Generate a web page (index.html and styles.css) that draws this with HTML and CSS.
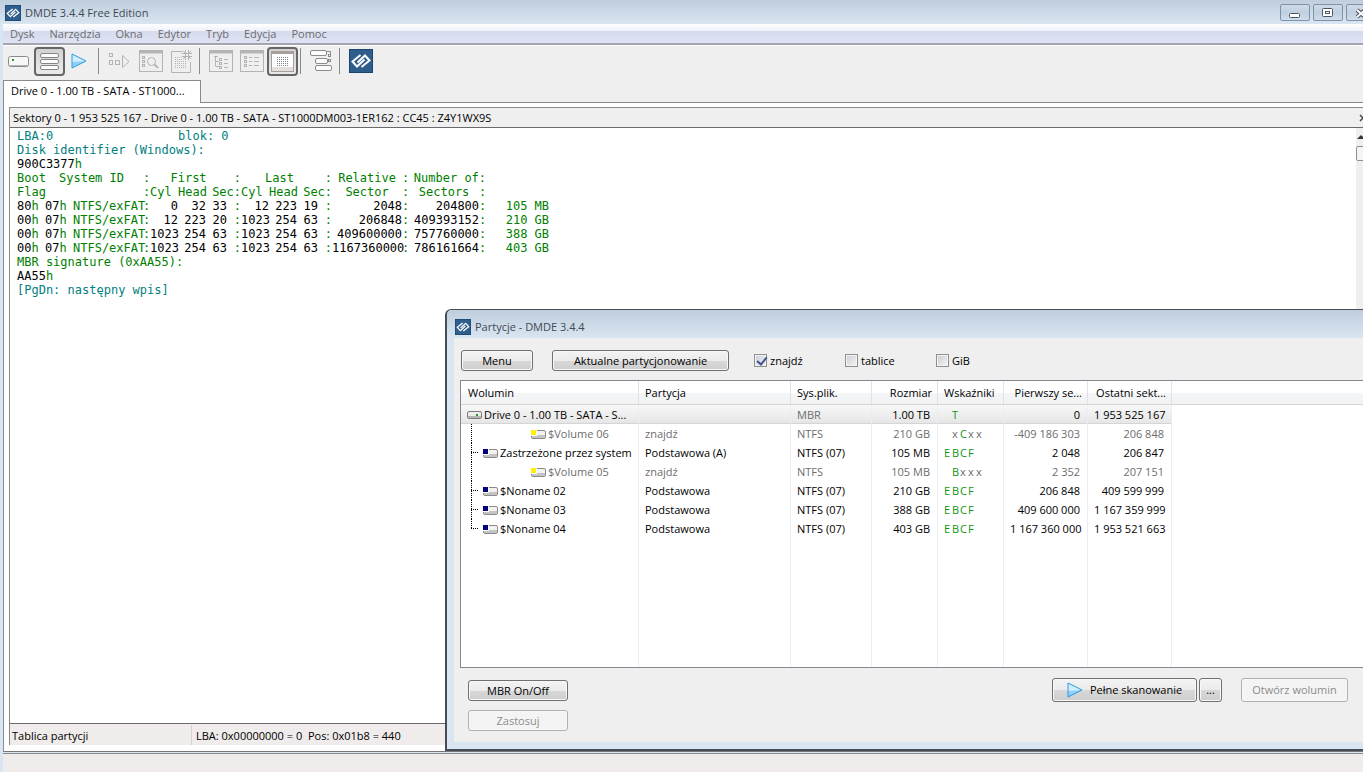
FILE: index.html
```
<!DOCTYPE html>
<html lang="pl">
<head>
    <meta charset="UTF-8">
    <meta name="viewport" content="width=device-width, initial-scale=1.0">
    <title>DMDE 3.4.4 Free Edition</title>
    <link rel="stylesheet" href="styles.css">
</head>
<body>
    <!-- shared icons -->
    <svg class="defs" width="0" height="0">
        <symbol id="logo" viewBox="0 0 24 24">
            <rect width="24" height="24" fill="#2f5d8c"/>
            <rect x="0.5" y="0.5" width="23" height="23" fill="none" stroke="#1d446f"/>
            <g fill="none" stroke="#fff" stroke-width="2">
                <path d="M11.500 6L3.500 12.500L8 17.500L15.500 10.500"/>
                <path d="M12.500 18L20.500 11.500L16 6.500L8.500 13.500"/>
            </g>
        </symbol>
        <symbol id="play" viewBox="0 0 16 16">
            <path d="M1 1L15 8L1 15Z" fill="#8fd0fb"/>
            <path d="M1 1L15 8L1 9Z" fill="#d3edfe"/>
            <path d="M1 1L15 8L1 15Z" fill="none" stroke="#2f9be0"/>
        </symbol>
        <symbol id="drive" viewBox="0 0 15 10">
            <rect x="0.5" y="1.500" width="14" height="7" rx="1.500" fill="#ececec" stroke="#7d7d7d"/>
            <rect x="1" y="6" width="13" height="2" fill="#b5b5b5"/>
            <rect x="9" y="4" width="2" height="2" fill="#1c9a2c"/>
        </symbol>
        <symbol id="part" viewBox="0 0 15 10">
            <rect x="0.5" y="1.500" width="14" height="8" rx="1.500" fill="#f2f2f2" stroke="#8a8a8a"/>
            <rect x="1" y="6" width="13" height="3" fill="#c4c4c4"/>
            <rect x="0" y="0" width="6" height="7" fill="#fff"/>
            <rect x="0" y="1" width="5" height="5" fill="currentColor"/>
        </symbol>
        <symbol id="tree-line" viewBox="0 0 22 19">
            <path d="M10.500 0V19" stroke="#000" stroke-dasharray="1 1"/>
        </symbol>
        <symbol id="tree-mid" viewBox="0 0 22 19">
            <path d="M10.500 0V19M10 9.500H18" stroke="#000" stroke-dasharray="1 1"/>
        </symbol>
        <symbol id="tree-end" viewBox="0 0 22 19">
            <path d="M10.500 0V10M10 9.500H18" stroke="#000" stroke-dasharray="1 1"/>
        </symbol>
    </svg>

    <div class="window">
        <header class="titlebar">
            <svg class="logo" width="16" height="16"><use href="#logo"/></svg>
            <span class="title">DMDE 3.4.4 Free Edition</span>
            <div class="window-buttons">
                <button aria-label="Minimalizuj"><svg width="12" height="14"><rect x="0.5" y="7.500" width="10" height="4" rx="1" fill="#fff" stroke="#4b5560"/></svg></button>
                <button aria-label="Maksymalizuj"><svg width="12" height="14"><rect x="0.500" y="2.500" width="10" height="8" rx="1" fill="#fff" stroke="#4b5560"/><rect x="3.500" y="5.500" width="4" height="2" fill="#fff" stroke="#4b5560"/></svg></button>
                <button aria-label="Zamknij"><svg width="12" height="14"><path d="M2 4L10 11M10 4L2 11" stroke="#4b5560" stroke-width="4"/><path d="M2 4L10 11M10 4L2 11" stroke="#fff" stroke-width="2"/></svg></button>
            </div>
        </header>

        <nav class="menu">
            <a href="#">Dysk</a>
            <a href="#">Narzędzia</a>
            <a href="#">Okna</a>
            <a href="#">Edytor</a>
            <a href="#">Tryb</a>
            <a href="#">Edycja</a>
            <a href="#">Pomoc</a>
        </nav>

        <div class="toolbar">
            <button aria-label="Wybierz dysk">
                <svg width="21" height="11"><rect x="0.5" y="0.5" width="20" height="10" rx="2" fill="#f7f7f7" stroke="#8b8b8b"/><path d="M2 9.500H19" stroke="#b5b5b5"/><rect x="4" y="3" width="2" height="2" fill="#2a9a2a"/></svg>
            </button>
            <button class="pressed" aria-label="Partycje">
                <svg width="19" height="17" fill="#fcfcfc" stroke="#858585"><rect x="0.5" y="0.5" width="18" height="4" rx="1.500"/><rect x="0.5" y="6.500" width="18" height="4" rx="1.500"/><rect x="0.5" y="12.500" width="18" height="4" rx="1.500"/></svg>
            </button>
            <button class="scan" aria-label="Skanuj"><svg width="16" height="16"><use href="#play"/></svg></button>
            <span class="separator"></span>
            <button aria-label="Otwórz" disabled>
                <svg width="21" height="16" fill="none" stroke="#b4b4b4"><rect x="0.5" y="0.5" width="3" height="3"/><rect x="0.5" y="7.500" width="3" height="4"/><rect x="6.500" y="7.500" width="4" height="4"/><path d="M13.500 2.500V14.500L20 8.500Z"/></svg>
            </button>
            <button aria-label="Szukaj" disabled>
                <svg width="24" height="22" fill="none" stroke="#b4b4b4"><rect x="0.5" y="0.5" width="23" height="21"/><path d="M1 2H23" stroke-width="3"/><rect x="3.500" y="6.500" width="2" height="2"/><rect x="3.500" y="10.500" width="2" height="2"/><rect x="3.500" y="14.500" width="2" height="2"/><circle cx="12.500" cy="11.500" r="4"/><path d="M15.500 14.500L19 18" stroke-width="2"/></svg>
            </button>
            <button aria-label="Nowy" disabled>
                <svg width="21" height="24" fill="none" stroke="#b4b4b4"><path d="M11 2.500H0.500V23.500H19.500V13"/><path d="M4 8.500H10M4 10.500H12M4 12.500H15M4 14.500H15M4 16.500H15M4 18.500H15" stroke-dasharray="1 1"/><path d="M14.500 1V4M17.500 1V4M14.500 8V11M17.500 8V11M10.500 4.500H14M10.500 7.500H14M18 4.500H21M18 7.500H21M12 2L14 4M20 2L18 4M12 10L14 8M20 10L18 8"/><rect x="14.500" y="4.500" width="3" height="3" fill="#efefef"/></svg>
            </button>
            <span class="separator"></span>
            <button aria-label="Drzewo" disabled>
                <svg width="24" height="22" fill="none" stroke="#b4b4b4"><rect x="0.5" y="0.5" width="23" height="21"/><path d="M1 2H23" stroke-width="3"/><path d="M5 6.500H9M6.500 7V16.500M7 11.500H10M7 16.500H10M15 9.500H19M15 13.500H19M15 17.500H19"/><rect x="10.500" y="8.500" width="2" height="2"/><rect x="10.500" y="12.500" width="2" height="2"/><rect x="10.500" y="16.500" width="2" height="2"/></svg>
            </button>
            <button aria-label="Lista" disabled>
                <svg width="24" height="22" fill="none" stroke="#b4b4b4"><rect x="0.5" y="0.5" width="23" height="21"/><path d="M1 2H23" stroke-width="3"/><rect x="4.500" y="6.500" width="2" height="2"/><rect x="4.500" y="10.500" width="2" height="2"/><rect x="4.500" y="14.500" width="2" height="2"/><path d="M9 7.500H12M14 7.500H19M9 11.500H12M14 11.500H19M9 15.500H12M14 15.500H19"/></svg>
            </button>
            <button class="pressed" aria-label="Edytor dysku">
                <svg width="23" height="21" fill="none"><rect x="0.5" y="0.5" width="22" height="20" fill="#fff" stroke="#a89f9c"/><path d="M1 2H22" stroke="#a89f9c" stroke-width="2"/><path d="M1 16H22V20H1Z" fill="#e4dfdd"/><path d="M6 6.500H18M6 8.500H18M6 10.500H18M6 12.500H18M6 14.500H18" stroke="#7b8288" stroke-dasharray="1 1"/></svg>
            </button>
            <span class="separator"></span>
            <button aria-label="Okna">
                <svg width="23" height="22" fill="#fcfcfc" stroke="#8b8b8b"><path d="M14 1.500H20.500V4" fill="none"/><rect x="0.5" y="0.5" width="16" height="5" rx="1.500"/><rect x="5.500" y="8.500" width="12" height="5" rx="1.500"/><rect x="5.500" y="15.500" width="16" height="5" rx="1.500"/><rect x="18.500" y="4.500" width="2" height="2"/><rect x="18.500" y="9.500" width="2" height="2"/></svg>
            </button>
            <span class="separator"></span>
            <button aria-label="O programie"><svg width="24" height="24"><use href="#logo"/></svg></button>
        </div>

        <div class="tabs">
            <a class="tab" href="#">Drive 0 - 1.00 TB - SATA - ST1000...</a>
        </div>

        <main class="workspace">
            <section class="panel">
                <div class="panel-title">
                    <span>Sektory 0 - 1 953 525 167 - Drive 0 - 1.00 TB - SATA - ST1000DM003-1ER162 : CC45 : Z4Y1WX9S</span>
                    <button class="panel-close" aria-label="Zamknij panel"><svg width="8" height="8"><path d="M1 1L7 7M7 1L1 7" stroke="#444" stroke-width="1.500"/></svg></button>
                </div>
                <div class="panel-body">
                    <div class="sector">
                        <div class="sector-line teal"><span class="lba">LBA:0</span><span>blok: 0</span></div>
                        <div class="sector-line teal">Disk identifier (Windows):</div>
                        <div class="sector-line">900C3377<i>h</i></div>
                        <table class="mbr">
                            <colgroup>
                                <col class="ch4"><col class="ch4"><col class="ch10"><col class="ch1">
                                <col class="ch4"><col class="ch4"><col class="ch3"><col class="ch2">
                                <col class="ch4"><col class="ch4"><col class="ch3"><col class="ch2">
                                <col class="ch10"><col class="ch1"><col class="ch10"><col class="ch1"><col class="ch9">
                            </colgroup>
                            <thead>
                                <tr><th class="left">Boot</th><th colspan="2"><span class="system">System ID</span></th><th>:</th><th colspan="3" class="center">First</th><th>:</th><th colspan="3" class="center">Last</th><th>:</th><th class="center">Relative</th><th>:</th><th colspan="2">Number of:</th><th></th></tr>
                                <tr><th class="left">Flag</th><th colspan="2"></th><th>:</th><th class="left">Cyl</th><th>Head</th><th colspan="2">Sec:</th><th class="left">Cyl</th><th>Head</th><th colspan="2">Sec:</th><th class="center">Sector</th><th>:</th><th class="center">Sectors</th><th>:</th><th></th></tr>
                            </thead>
                            <tbody>
                                <tr><td class="left">80<i>h</i></td><td class="left">07<i>h</i></td><td><i>NTFS/exFAT</i></td><td><i>:</i></td><td>0</td><td>32</td><td>33</td><td><i>:</i></td><td>12</td><td>223</td><td>19</td><td><i>:</i></td><td>2048</td><td><i>:</i></td><td>204800</td><td><i>:</i></td><td><i>105 MB</i></td></tr>
                                <tr><td class="left">00<i>h</i></td><td class="left">07<i>h</i></td><td><i>NTFS/exFAT</i></td><td><i>:</i></td><td>12</td><td>223</td><td>20</td><td><i>:</i></td><td>1023</td><td>254</td><td>63</td><td><i>:</i></td><td>206848</td><td><i>:</i></td><td>409393152</td><td><i>:</i></td><td><i>210 GB</i></td></tr>
                                <tr><td class="left">00<i>h</i></td><td class="left">07<i>h</i></td><td><i>NTFS/exFAT</i></td><td><i>:</i></td><td>1023</td><td>254</td><td>63</td><td><i>:</i></td><td>1023</td><td>254</td><td>63</td><td><i>:</i></td><td>409600000</td><td><i>:</i></td><td>757760000</td><td><i>:</i></td><td><i>388 GB</i></td></tr>
                                <tr><td class="left">00<i>h</i></td><td class="left">07<i>h</i></td><td><i>NTFS/exFAT</i></td><td><i>:</i></td><td>1023</td><td>254</td><td>63</td><td><i>:</i></td><td>1023</td><td>254</td><td>63</td><td><i>:</i></td><td>1167360000</td><td><i>:</i></td><td>786161664</td><td><i>:</i></td><td><i>403 GB</i></td></tr>
                            </tbody>
                        </table>
                        <div class="sector-line green">MBR signature (0xAA55):</div>
                        <div class="sector-line">AA55<i>h</i></div>
                        <div class="sector-line teal">[PgDn: następny wpis]</div>
                    </div>
                    <div class="scrollbar">
                        <svg width="8" height="18"><path d="M1 11L5 7L9 11Z" fill="#333"/></svg>
                        <div class="thumb"></div>
                    </div>
                </div>
                <div class="panel-status">
                    <span class="status-name">Tablica partycji</span>
                    <span class="status-pos">LBA: 0x00000000 = 0&nbsp; Pos: 0x01b8 = 440</span>
                </div>
            </section>
        </main>
        <footer class="statusbar"></footer>
    </div>

    <div class="dialog" role="dialog" aria-labelledby="dialogTitle">
        <div class="dialog-title">
            <svg width="16" height="16"><use href="#logo"/></svg>
            <span id="dialogTitle">Partycje - DMDE 3.4.4</span>
        </div>
        <div class="dialog-body">
            <div class="options">
                <button class="btn btn-menu">Menu</button>
                <button class="btn btn-current">Aktualne partycjonowanie</button>
                <label class="check" for="found"><input type="checkbox" id="found" checked>znajdź</label>
                <label class="check" for="tables"><input type="checkbox" id="tables">tablice</label>
                <label class="check" for="gib"><input type="checkbox" id="gib">GiB</label>
            </div>
            <div class="list">
                <table class="volumes">
                    <colgroup>
                        <col class="c-volume"><col class="c-partition"><col class="c-fs"><col class="c-size"><col class="c-flags"><col class="c-sector"><col class="c-sector"><col>
                    </colgroup>
                    <thead>
                        <tr><th>Wolumin</th><th>Partycja</th><th>Sys.plik.</th><th class="num">Rozmiar</th><th>Wskaźniki</th><th class="num">Pierwszy se...</th><th class="num">Ostatni sekt...</th><th></th></tr>
                    </thead>
                    <tbody>
                        <tr class="selected">
                            <td><div class="name"><svg width="15" height="10"><use href="#drive"/></svg>Drive 0 - 1.00 TB - SATA - S...</div></td>
                            <td></td><td class="muted">MBR</td><td class="num">1.00 TB</td>
                            <td><div class="flags"><b></b><b>T</b></div></td>
                            <td class="num">0</td><td class="num">1 953 525 167</td><td class="rest"></td>
                        </tr>
                        <tr class="muted">
                            <td><div class="name found"><svg class="tree" width="22" height="19"><use href="#tree-line"/></svg><svg class="yellow" width="15" height="10"><use href="#part"/></svg>$Volume 06</div></td>
                            <td>znajdź</td><td>NTFS</td><td class="num">210 GB</td>
                            <td><div class="flags"><span></span><span>x</span><b>C</b><span>x</span><span>x</span></div></td>
                            <td class="num">-409 186 303</td><td class="num">206 848</td><td></td>
                        </tr>
                        <tr>
                            <td><div class="name child"><svg class="tree" width="22" height="19"><use href="#tree-mid"/></svg><svg class="navy" width="15" height="10"><use href="#part"/></svg>Zastrzeżone przez system</div></td>
                            <td>Podstawowa (A)</td><td>NTFS (07)</td><td class="num">105 MB</td>
                            <td><div class="flags"><b>E</b><b>B</b><b>C</b><b>F</b></div></td>
                            <td class="num">2 048</td><td class="num">206 847</td><td></td>
                        </tr>
                        <tr class="muted">
                            <td><div class="name found"><svg class="tree" width="22" height="19"><use href="#tree-line"/></svg><svg class="yellow" width="15" height="10"><use href="#part"/></svg>$Volume 05</div></td>
                            <td>znajdź</td><td>NTFS</td><td class="num">105 MB</td>
                            <td><div class="flags"><span></span><b>B</b><span>x</span><span>x</span><span>x</span></div></td>
                            <td class="num">2 352</td><td class="num">207 151</td><td></td>
                        </tr>
                        <tr>
                            <td><div class="name child"><svg class="tree" width="22" height="19"><use href="#tree-mid"/></svg><svg class="navy" width="15" height="10"><use href="#part"/></svg>$Noname 02</div></td>
                            <td>Podstawowa</td><td>NTFS (07)</td><td class="num">210 GB</td>
                            <td><div class="flags"><b>E</b><b>B</b><b>C</b><b>F</b></div></td>
                            <td class="num">206 848</td><td class="num">409 599 999</td><td></td>
                        </tr>
                        <tr>
                            <td><div class="name child"><svg class="tree" width="22" height="19"><use href="#tree-mid"/></svg><svg class="navy" width="15" height="10"><use href="#part"/></svg>$Noname 03</div></td>
                            <td>Podstawowa</td><td>NTFS (07)</td><td class="num">388 GB</td>
                            <td><div class="flags"><b>E</b><b>B</b><b>C</b><b>F</b></div></td>
                            <td class="num">409 600 000</td><td class="num">1 167 359 999</td><td></td>
                        </tr>
                        <tr>
                            <td><div class="name child"><svg class="tree" width="22" height="19"><use href="#tree-end"/></svg><svg class="navy" width="15" height="10"><use href="#part"/></svg>$Noname 04</div></td>
                            <td>Podstawowa</td><td>NTFS (07)</td><td class="num">403 GB</td>
                            <td><div class="flags"><b>E</b><b>B</b><b>C</b><b>F</b></div></td>
                            <td class="num">1 167 360 000</td><td class="num">1 953 521 663</td><td></td>
                        </tr>
                        <tr class="filler"><td></td><td></td><td></td><td></td><td></td><td></td><td></td><td></td></tr>
                    </tbody>
                </table>
            </div>
            <div class="actions">
                <div class="actions-left">
                    <button class="btn">MBR On/Off</button>
                    <button class="btn" disabled>Zastosuj</button>
                </div>
                <div class="actions-right">
                    <button class="btn btn-scan"><svg width="16" height="16"><use href="#play"/></svg>Pełne skanowanie</button>
                    <button class="btn btn-more">...</button>
                    <button class="btn btn-open" disabled>Otwórz wolumin</button>
                </div>
            </div>
        </div>
    </div>
</body>
</html>
```

FILE: styles.css
```
* {
    box-sizing: border-box;
}
body {
    margin: 0;
    height: 100vh;
    overflow: hidden;
    position: relative;
    font-family: "Open Sans", "Noto Sans", sans-serif;
    font-size: 11px;
    line-height: 14px;
    color: #000;
    background: #d9e5f1;
}
button, input {
    font: inherit;
    color: inherit;
}
a {
    color: inherit;
    text-decoration: none;
}
svg {
    display: block;
    flex: none;
}
.defs {
    position: absolute;
}

/* main window */
.window {
    height: 100%;
    display: flex;
    flex-direction: column;
    padding-left: 3px;
}
.titlebar {
    display: flex;
    align-items: center;
    height: 24px;
    flex: none;
    margin-left: -3px;
    padding: 1px 0 0 5px;
    gap: 4px;
    background: linear-gradient(#bfcedd, #d9e5f1);
    color: #3f4a55;
}
.title {
    flex: 1;
}
.window-buttons {
    display: flex;
    gap: 3px;
    margin-right: -13px;
}
.window-buttons button {
    display: flex;
    justify-content: center;
    align-items: center;
    width: 30px;
    height: 17px;
    padding: 0;
    border: 1px solid #7f92a8;
    border-radius: 2px;
    background: linear-gradient(#cfdbe8, #c0cfdf 50%, #cfdcea);
}
.menu {
    display: flex;
    align-items: center;
    height: 21px;
    flex: none;
    padding-left: 7px;
    gap: 15px;
    background: linear-gradient(#fff, #eef1f9 35%, #d5daed 36%, #dfe3f3);
    border-bottom: 2px solid #a3a5b0;
    color: #6d6d6d;
}
.toolbar {
    display: flex;
    align-items: center;
    height: 35px;
    flex: none;
    padding-bottom: 4px;
    background: #efefef;
    border-top: 1px solid #fff;
}
.toolbar button {
    display: flex;
    justify-content: center;
    align-items: center;
    width: 31px;
    height: 29px;
    padding: 0;
    border: 0;
    background: none;
}
.toolbar .scan {
    padding-right: 3px;
}
.toolbar .pressed {
    border: 2px solid #666;
    border-radius: 4px;
    background: linear-gradient(#d2d2d2, #ebebeb);
}
.separator {
    width: 8px;
    height: 26px;
    background: linear-gradient(#8a8a8a, #8a8a8a) 2px 0 / 1px 100% no-repeat;
}
.tabs {
    display: flex;
    height: 23px;
    flex: none;
    background: #efefef;
}
.tabs::after {
    content: "";
    flex: 1;
    border-bottom: 1px solid #8a8a8a;
}
.tab {
    width: 198px;
    padding: 3px 7px;
    white-space: nowrap;
    border: 1px solid #8a8a8a;
    border-bottom: 0;
    background: #fff;
}
.workspace {
    flex: 1;
    display: flex;
    min-height: 0;
    padding: 4px 0 6px 5px;
    background: #fff;
    border-left: 1px solid #8a8f96;
    border-bottom: 1px solid #777;
}
.panel {
    flex: 1;
    display: flex;
    flex-direction: column;
    min-width: 0;
    border: 1px solid #8a8a8a;
    border-width: 1px 0 0 1px;
}
.panel-title {
    display: flex;
    align-items: center;
    justify-content: space-between;
    height: 20px;
    flex: none;
    padding-left: 3px;
    background: #efefef;
    border-bottom: 1px solid #6a6a6a;
}
.panel-close {
    border: 0;
    padding: 0;
    margin-right: -4px;
    background: none;
}
.panel-body {
    flex: 1;
    display: flex;
    min-height: 0;
}
.scrollbar {
    width: 7px;
    overflow: hidden;
    background: #efefef;
}
.thumb {
    width: 17px;
    height: 15px;
    border: 1px solid #8f8f8f;
    border-radius: 2px;
    background: #f5f5f5;
}
.panel-status {
    display: flex;
    align-items: center;
    height: 22px;
    flex: none;
    border-top: 1px solid #6a6a6a;
    background: #f0eceb;
}
.status-name {
    width: 182px;
    padding: 4px 2px 2px;
    border-right: 1px solid #d5d1d0;
}
.status-pos {
    padding: 4px 4px 2px;
}
.statusbar {
    height: 19px;
    flex: none;
    margin-top: 1px;
    border-top: 1px solid #8a8a8a;
    background: #f0eceb;
}

/* sector view */
.sector {
    flex: 1;
    padding: 1px 0 0 7px;
    font-family: "DejaVu Sans Mono", monospace;
    font-size: 12px;
    line-height: 14px;
}
.sector i {
    font-style: normal;
    color: #008000;
}
.sector-line {
    display: flex;
    height: 14px;
}
.lba {
    width: 161px;
}
.teal {
    color: #008080;
}
.green {
    color: #008000;
}
.mbr {
    width: 532px;
    table-layout: fixed;
    border-collapse: collapse;
}
.mbr th, .mbr td {
    height: 14px;
    padding: 0;
    text-align: right;
    white-space: nowrap;
    font-weight: normal;
}
.mbr th {
    color: #008000;
}
.mbr .left {
    text-align: left;
}
.mbr .center {
    text-align: center;
}
.system {
    display: inline-block;
    width: 84px;
    text-align: left;
}
.ch1 { width: 7px; }
.ch2 { width: 14px; }
.ch3 { width: 21px; }
.ch4 { width: 28px; }
.ch9 { width: 63px; }
.ch10 { width: 70px; }

/* partitions dialog */
.dialog {
    position: absolute;
    left: 445px;
    right: 0;
    bottom: 21px;
    padding: 0 0 7px 7px;
    border: 1px solid #464d57;
    border-width: 1px 0 2px 2px;
    border-top-left-radius: 6px;
    background: #d9e5f1;
}
.dialog-title {
    display: flex;
    align-items: center;
    gap: 4px;
    height: 28px;
    margin-left: -7px;
    padding: 5px 0 0 8px;
    border-top-left-radius: 5px;
    background: linear-gradient(#bfcedd, #d9e5f1);
    color: #3f4a55;
}
.dialog-body {
    padding: 12px 0 11px 6px;
    background: #efefef;
}
.options {
    display: flex;
    align-items: center;
    margin-bottom: 9px;
    padding-left: 1px;
}
.btn {
    display: flex;
    align-items: center;
    justify-content: center;
    height: 21px;
    padding: 0;
    border: 1px solid #707070;
    border-radius: 3px;
    background: linear-gradient(#f3f3f3, #ebebeb 50%, #d8d8d8 51%, #cecece);
    box-shadow: inset 0 0 0 1px #f8f8f8;
    cursor: pointer;
}
.btn:disabled {
    border-color: #b0b0b0;
    background: #f4f4f4;
    color: #8c8c8c;
}
.btn-menu {
    width: 72px;
    margin-right: 19px;
}
.btn-current {
    width: 177px;
    margin-right: 25px;
}
.check {
    display: flex;
    align-items: center;
    width: 91px;
    gap: 3px;
}
.check input {
    appearance: none;
    width: 13px;
    height: 13px;
    margin: 0;
    border: 1px solid #8e8f8f;
    background: linear-gradient(135deg, #c8ccd2, #f6f6f6);
    box-shadow: inset 0 0 0 1px #f4f4f4;
}
.check input:checked::after {
    content: "";
    display: block;
    width: 4px;
    height: 8px;
    margin: 0 0 0 4px;
    border: solid #40568f;
    border-width: 0 2px 2px 0;
    transform: rotate(40deg);
}
.list {
    height: 288px;
    border: 1px solid #828790;
    border-right: 0;
    background: #fff;
}
.volumes {
    width: 100%;
    height: 100%;
    table-layout: fixed;
    border-collapse: separate;
    border-spacing: 0;
}
.c-volume { width: 178px; }
.c-partition { width: 152px; }
.c-fs { width: 81px; }
.c-size, .c-flags { width: 66px; }
.c-sector { width: 84px; }
.volumes th {
    height: 24px;
    padding: 0 6px;
    text-align: left;
    font-weight: normal;
    white-space: nowrap;
    background: linear-gradient(#fff 50%, #f4f6f8 51%, #f1f2f4);
    border-right: 1px solid #dfe3e8;
    border-bottom: 1px solid #d5d5d5;
}
.volumes th:first-child {
    padding-left: 7px;
}
.volumes td {
    height: 19px;
    padding: 0 6px;
    white-space: nowrap;
    border-right: 1px solid #e8eef3;
}
.volumes th:last-child, .volumes td:last-child {
    border-right: 0;
}
.volumes .num {
    padding-right: 7px;
    text-align: right;
}
.volumes th.num {
    padding-right: 5px;
}
.volumes .filler td {
    height: auto;
}
.selected td {
    background: linear-gradient(#f8f8f8, #e5e5e5);
    box-shadow: inset 0 -1px #d5d5d5;
}
.selected .rest {
    background: none;
    box-shadow: none;
}
.muted {
    color: #6d6d6d;
}
.name {
    display: flex;
    align-items: center;
    gap: 2px;
    margin-right: -6px;
}
.tree {
    margin-left: -6px;
    margin-right: -2px;
}
.found .tree {
    margin-right: 46px;
}
.navy {
    color: #000080;
}
.yellow {
    color: #fff200;
}
.flags {
    display: grid;
    grid-template-columns: repeat(5, 8px);
}
.flags b {
    font-weight: normal;
    color: #109410;
}
.actions {
    display: flex;
    justify-content: space-between;
    align-items: flex-start;
    padding: 10px 15px 0 8px;
}
.actions-left {
    display: flex;
    flex-direction: column;
    gap: 9px;
    padding-top: 2px;
}
.actions-left .btn {
    width: 100px;
}
.actions-right {
    display: flex;
}
.actions-right .btn {
    height: 24px;
}
.btn-scan {
    width: 145px;
    gap: 7px;
    margin-right: 2px;
}
.btn-more {
    width: 23px;
    margin-right: 19px;
}
.btn-open {
    width: 107px;
}
```
